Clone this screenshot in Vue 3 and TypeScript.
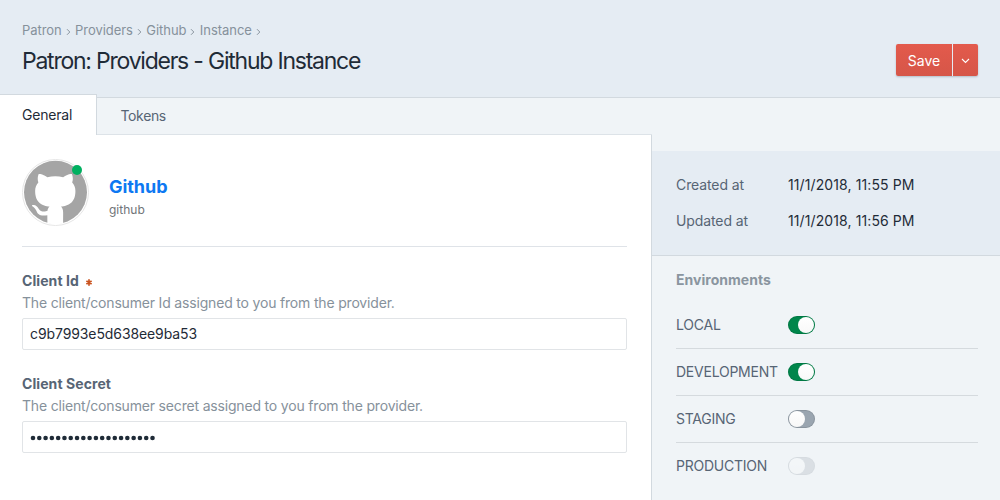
<script setup lang="ts">
import { ref } from 'vue'

interface Environment {
  name: string
  state: 'on' | 'off' | 'disabled'
}

const crumbs = ['Patron', 'Providers', 'Github', 'Instance']

const meta = [
  { label: 'Created at', value: '11/1/2018, 11:55 PM' },
  { label: 'Updated at', value: '11/1/2018, 11:56 PM' },
]

const environments = ref<Environment[]>([
  { name: 'LOCAL', state: 'on' },
  { name: 'DEVELOPMENT', state: 'on' },
  { name: 'STAGING', state: 'off' },
  { name: 'PRODUCTION', state: 'disabled' },
])

const secretDots = Array.from({ length: 20 }, (_, i) => 3 + i * 6.29)

function toggle(env: Environment) {
  if (env.state !== 'disabled') env.state = env.state === 'on' ? 'off' : 'on'
}
</script>

<template>
  <div class="page">
    <header class="header">
      <div>
        <nav class="crumbs">
          <span v-for="c in crumbs" :key="c" class="crumb">
            <span>{{ c }}</span>
            <svg class="sep" width="5" height="8" viewBox="0 0 5 8"><path d="M1 1.2 3.8 4 1 6.8" /></svg>
          </span>
        </nav>
        <h1 class="title">Patron: Providers - Github Instance</h1>
      </div>
      <div class="btngroup">
        <button class="btn save">Save</button>
        <button class="btn more" aria-label="More">
          <svg width="9" height="6" viewBox="0 0 9 6"><path d="M1 1 4.5 4.5 8 1" /></svg>
        </button>
      </div>
    </header>

    <div class="body">
      <main class="main">
        <nav class="tabs">
          <a class="tab active">General</a>
          <a class="tab">Tokens</a>
        </nav>
        <section class="content">
          <div class="provider">
            <div class="avatar">
              <svg class="mark" viewBox="0 0 67 67">
                <defs><clipPath id="disc"><circle cx="33.5" cy="33.5" r="32" /></clipPath></defs>
                <circle cx="33.5" cy="33.5" r="33" fill="#fff" stroke="#e6e6e6" />
                <circle cx="33.5" cy="33.3" r="31.5" fill="#a5a5a5" />
                <g clip-path="url(#disc)">
                  <path transform="translate(1.6 2) scale(3.95)" fill="#fff" d="M5.96 17L6.02 15.21c0-.19-.01-.82-.01-1.49-2.01.37-2.53-.49-2.69-.94-.09-.23-.48-.94-.82-1.13-.28-.15-.68-.52-.01-.53.63-.01 1.08.58 1.23.82.72 1.21 1.87.87 2.33.66.07-.52.28-.87.51-1.07-1.78-.2-3.64-.89-3.64-3.95 0-.87.31-1.59.82-2.15-.08-.2-.36-1.02.08-2.12 0 0 .67-.21 2.2.82.64-.18 1.32-.27 2-.27s1.36.09 2 .27c1.53-1.04 2.2-.82 2.2-.82.44 1.1.16 1.92.08 2.12.51.56.82 1.27.82 2.15 0 3.07-1.87 3.75-3.65 3.95.29.25.54.73.54 1.48 0 1.07-.01 1.93-.01 2.2L10.04 17z" />
                </g>
              </svg>
              <span class="status"></span>
            </div>
            <div class="who">
              <div class="name">Github</div>
              <div class="handle">github</div>
            </div>
          </div>

          <div class="field first">
            <div class="label">
              <span>Client Id</span>
              <svg class="required" width="6" height="7" viewBox="0 0 6 7"><path d="M3 .3v6.4M.4 1.9l5.2 3.2M5.6 1.9.4 5.1" /></svg>
            </div>
            <div class="hint">The client/consumer Id assigned to you from the provider.</div>
            <div class="input"><span class="value">c9b7993e5d638ee9ba53</span></div>
          </div>
          <div class="field">
            <div class="label"><span>Client Secret</span></div>
            <div class="hint">The client/consumer secret assigned to you from the provider.</div>
            <div class="input">
              <svg class="dots" width="128" height="8" viewBox="0 0 128 8">
                <circle v-for="x in secretDots" :key="x" :cx="x" cy="4" r="2.3" />
              </svg>
            </div>
          </div>
        </section>
      </main>

      <aside class="side">
        <dl class="meta">
          <div v-for="m in meta" :key="m.label" class="row">
            <dt>{{ m.label }}</dt>
            <dd>{{ m.value }}</dd>
          </div>
        </dl>
        <div class="envs">
          <h2>Environments</h2>
          <div v-for="env in environments" :key="env.name" class="env">
            <span class="envname">{{ env.name }}</span>
            <span class="switch" :class="env.state" @click="toggle(env)"><i></i></span>
          </div>
        </div>
      </aside>
    </div>
  </div>
</template>

<style>
body { margin: 0; overflow: hidden; }
</style>

<style scoped>
* { box-sizing: border-box; }
.page {
  width: 1000px;
  height: 500px;
  overflow: hidden;
  background: #f0f4f7;
  font-family: Inter, "Liberation Sans", sans-serif;
  font-size: 14px;
  color: #1f2b37;
}
.header {
  display: flex;
  justify-content: space-between;
  height: 98px;
  padding: 22px 22px 0;
  background: #e5ecf3;
  border-bottom: 1px solid #d2d9df;
}
.crumbs { display: flex; height: 17px; line-height: 17px; font-size: 13px; letter-spacing: -0.05px; color: #86919b; }
.crumb { display: flex; align-items: center; white-space: nowrap; }
.sep { margin: 3px 4.6px 0 3.8px; fill: none; stroke: #8a959f; stroke-width: 1; }
.title {
  margin: 7px 0 0;
  font-size: 23px;
  line-height: 30px;
  font-weight: 400;
  letter-spacing: -1.25px;
  word-spacing: 0.2px;
  white-space: nowrap;
}
.btngroup {
  display: flex;
  gap: 1px;
  height: 32px;
  margin-top: 22px;
  border-radius: 2px;
  box-shadow: 0 1px 2px rgba(40, 60, 80, 0.25);
}
.btn {
  display: flex;
  align-items: center;
  justify-content: center;
  padding: 2px 0 0;
  border: 0;
  background: linear-gradient(#e35a4c, #d65648);
  color: #fff;
  font: 14px Inter, sans-serif;
}
.save { width: 56px; padding: 0; border-radius: 2px 0 0 2px; }
.more { width: 25px; border-radius: 0 2px 2px 0; }
.more svg { fill: none; stroke: #fff; stroke-width: 1.1; }
.body { display: flex; }
.main { width: 652px; }
.tabs { display: flex; height: 37px; border-bottom: 1px solid #dde3e8; }
.tab { padding-left: 23.5px; line-height: 35px; letter-spacing: -0.36px; color: #576575; }
.tab.active {
  position: relative;
  width: 97px;
  height: 41px;
  margin-top: -4px;
  padding-left: 22px;
  line-height: 39px;
  letter-spacing: -0.2px;
  background: #fff;
  border-top: 1px solid #d2d9df;
  border-right: 1px solid #d2d9df;
  color: #1f2b37;
}
.content { height: 365px; padding: 24px 24px 0 22px; background: #fff; border-right: 1px solid #d2d9df; }
.provider { display: flex; height: 88px; border-bottom: 1px solid #dfe3e8; }
.avatar { position: relative; width: 67px; height: 67px; }
.mark { display: block; width: 67px; height: 67px; }
.status { position: absolute; left: 50px; top: 6px; width: 10px; height: 10px; border-radius: 50%; background: #00b060; }
.who { margin: 16px 0 0 20px; }
.name { font-size: 18px; line-height: 24px; font-weight: 700; letter-spacing: -0.05px; color: #0d78f2; }
.handle { margin-top: 3px; font-size: 12px; line-height: 16px; color: #707478; }
.field { margin-top: 24px; }
.label { display: flex; height: 20px; line-height: 20px; font-weight: 700; letter-spacing: 0.08px; color: #576575; }
.required { margin: 8px 0 0 7.5px; fill: none; stroke: #ca5420; stroke-width: 1.7; }
.hint { height: 22px; margin-top: 1px; line-height: 22px; letter-spacing: -0.18px; color: #86919b; white-space: nowrap; }
.input { display: flex; align-items: center; width: 605px; height: 32px; margin-top: 4px; padding: 0 7px; border: 1px solid #e1e4e7; border-radius: 2px; }
.value { margin-top: -1px; letter-spacing: -0.1px; }
.dots { margin-top: 2px; fill: #1f2b37; }
.side { flex: 1; padding-top: 53px; }
.meta { height: 105px; margin: 0; padding: 16px 24px 0; background: #e5ecf3; border-bottom: 1px solid #d2d9df; }
.row { display: flex; height: 36px; line-height: 36px; }
dt { width: 112px; letter-spacing: -0.1px; color: #576575; }
dd { margin: 0; letter-spacing: 0.1px; white-space: nowrap; }
.envs { padding: 13px 22px 0 24px; }
h2 { margin: 0; height: 33px; font-size: 14px; line-height: 21px; font-weight: 700; letter-spacing: 0.03px; color: #8a959f; }
.env { display: flex; align-items: center; height: 47px; border-bottom: 1px solid #d5dade; }
.env:last-child { border-bottom-color: transparent; }
.envname { width: 112px; padding-bottom: 1px; letter-spacing: -0.24px; color: #576575; white-space: nowrap; }
.switch { display: flex; align-items: center; width: 27px; height: 18px; padding: 0.6px; border-radius: 9px; background: #9aa5b0; box-shadow: inset 0 0 0 1px rgba(0, 0, 0, 0.1); }
.switch i { width: 16.6px; height: 16.6px; border-radius: 50%; background: linear-gradient(#fff, #f8f8f8); }
.switch.on { justify-content: flex-end; background: #00864b; }
.switch.disabled { opacity: 0.25; }
</style>
